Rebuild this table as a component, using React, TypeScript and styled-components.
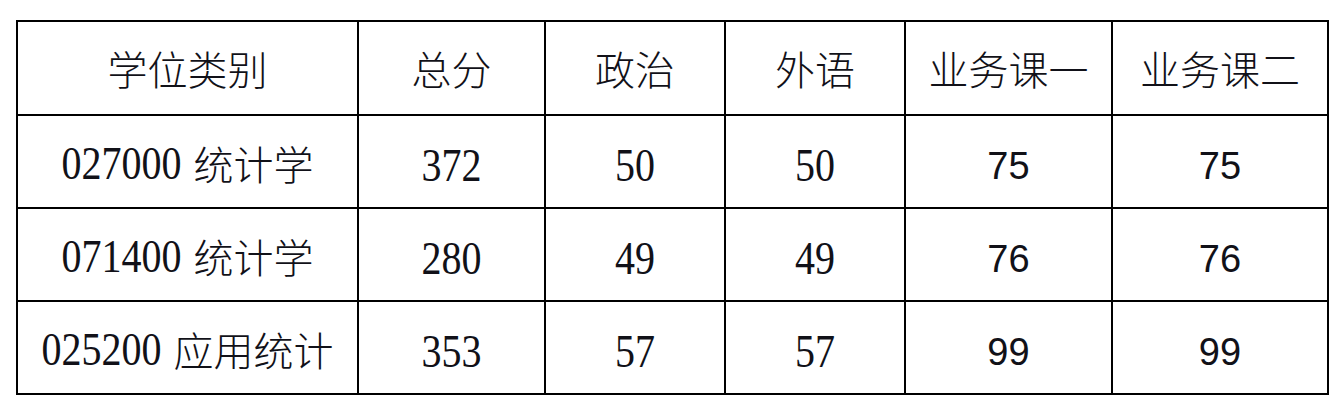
import React from "react";
import styled, { createGlobalStyle } from "styled-components";

type Cell = { text: string; serif?: boolean };

const GlobalStyle = createGlobalStyle`
	html, body {
		margin: 0;
		background: #fff;
	}
`;

const Page = styled.div`
	padding: 20px 15px 0 16px;
`;

const Table = styled.table`
	width: 1311px;
	table-layout: fixed;
	border-collapse: collapse;
	color: #111118;
	font-family: "Noto Sans CJK SC", sans-serif;
	font-weight: 300;
`;

const HeadCell = styled.th`
	height: 92px;
	border: 2px solid #000;
	font-size: 40px;
	font-weight: 300;
	text-align: center;
	vertical-align: middle;
	padding: 0;
`;

const BodyCell = styled.td`
	height: 91px;
	border: 2px solid #000;
	font-size: 40px;
	text-align: center;
	vertical-align: middle;
	padding: 0;
`;

const Num = styled.span<{ $serif?: boolean }>`
	display: inline-block;
	font-family: ${(p) => (p.$serif ? '"Liberation Serif", serif' : '"Liberation Sans", sans-serif')};
	font-size: ${(p) => (p.$serif ? "40px" : "38px")};
	font-weight: 400;
	transform: ${(p) => (p.$serif ? "scaleY(1.15)" : "none")};
`;

const Major = styled.span`
	display: inline-flex;
	align-items: center;
	gap: 12px;
`;

const widths = [341, 187, 180, 180, 207, 216];
const headers = ["学位类别", "总分", "政治", "外语", "业务课一", "业务课二"];

const rows: { code: string; name: string; cells: Cell[] }[] = [
	{
		code: "027000",
		name: "统计学",
		cells: [
			{ text: "372", serif: true },
			{ text: "50", serif: true },
			{ text: "50", serif: true },
			{ text: "75" },
			{ text: "75" },
		],
	},
	{
		code: "071400",
		name: "统计学",
		cells: [
			{ text: "280", serif: true },
			{ text: "49", serif: true },
			{ text: "49", serif: true },
			{ text: "76" },
			{ text: "76" },
		],
	},
	{
		code: "025200",
		name: "应用统计",
		cells: [
			{ text: "353", serif: true },
			{ text: "57", serif: true },
			{ text: "57", serif: true },
			{ text: "99" },
			{ text: "99" },
		],
	},
];

export default function App() {
	return (
		<Page>
			<GlobalStyle />
			<Table>
				<colgroup>
					{widths.map((w, i) => (
						<col key={i} style={{ width: w }} />
					))}
				</colgroup>
				<thead>
					<tr>
						{headers.map((h) => (
							<HeadCell key={h}>{h}</HeadCell>
						))}
					</tr>
				</thead>
				<tbody>
					{rows.map((row) => (
						<tr key={row.code}>
							<BodyCell>
								<Major>
									<Num $serif>{row.code}</Num>
									<span>{row.name}</span>
								</Major>
							</BodyCell>
							{row.cells.map((c, i) => (
								<BodyCell key={i}>
									<Num $serif={c.serif}>{c.text}</Num>
								</BodyCell>
							))}
						</tr>
					))}
				</tbody>
			</Table>
		</Page>
	);
}
